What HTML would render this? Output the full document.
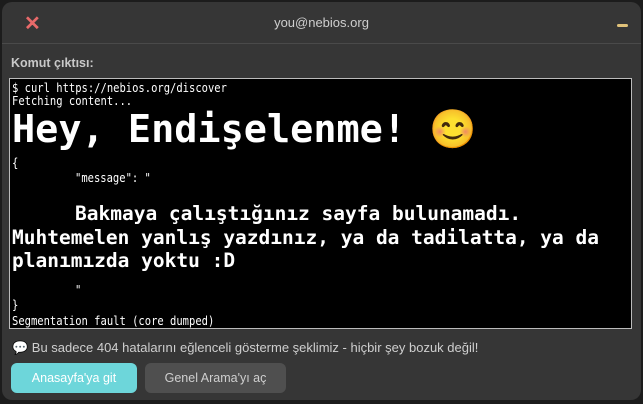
<!DOCTYPE html>
<html><head><meta charset="utf-8"><style>
html,body{margin:0;width:643px;height:404px;background:#1c1c1c;overflow:hidden}
.win{position:absolute;left:2px;top:2px;width:639px;height:398px;background:#363636;border-radius:10px;font-family:"Liberation Sans",sans-serif}
.hdr{height:41px;border-bottom:1px solid #4a4a4a;position:relative}
.title{position:absolute;left:0;right:0;top:13px;text-align:center;color:#cfcfcf;font-size:13px}
.x{position:absolute;left:22px;top:9px;color:#e86a6a;font-size:20px;font-weight:bold}
.min{position:absolute;right:13px;top:22px;width:11px;height:3px;background:#e0c27a;border-radius:2px}
.lbl{position:absolute;left:9px;top:54px;color:#c8c8c8;font-size:12.5px;font-weight:bold}
.term{position:absolute;left:7px;top:76px;width:621px;height:249px;background:#000;border:1px solid #bbb;font-family:"DejaVu Sans Mono",monospace;color:#fff;overflow:hidden}
.t{position:absolute;left:2px;font-size:12px;white-space:pre;line-height:13px;transform:scaleX(0.875);transform-origin:0 0}
.big{position:absolute;left:2px;font-size:38.5px;font-weight:bold;white-space:pre;line-height:40px}
.msg{position:absolute;left:2px;font-size:19.5px;font-weight:bold;line-height:23.5px;width:618px}
.note{position:absolute;left:10px;top:338px;color:#cfcfcf;font-size:13px}
.b1{position:absolute;left:9px;top:361px;width:126px;height:30px;border-radius:6px;background:#6dd6da;color:#fff;font-size:12.5px;text-align:center;line-height:30px}
.b2{position:absolute;left:143px;top:361px;width:141px;height:30px;border-radius:6px;background:#4f4f4f;color:#cfcfcf;font-size:12.5px;text-align:center;line-height:30px}
</style></head><body>
<div class="win">
<div class="hdr"><span class="x">✕</span><div class="title">you@nebios.org</div><div class="min"></div></div>
<div class="lbl">Komut çıktısı:</div>
<div class="term">
<div class="t" style="top:3px">$ curl https://nebios.org/discover</div>
<div class="t" style="top:16px">Fetching content...</div>
<div class="big" style="top:31px">Hey, Endişelenme! <span style="font-family:'Noto Color Emoji',sans-serif;font-size:38px">😊</span></div>
<div class="t" style="top:78px">{</div>
<div class="t" style="top:93px;left:65px">"message": "</div>
<div class="msg" style="top:123px"><span style="padding-left:63px"></span>Bakmaya çalıştığınız sayfa bulunamadı. Muhtemelen yanlış yazdınız, ya da tadilatta, ya da planımızda yoktu :D</div>
<div class="t" style="top:205px;left:65px">"</div>
<div class="t" style="top:220px">}</div>
<div class="t" style="top:236px">Segmentation fault (core dumped)</div>
</div>
<div class="note">💬 Bu sadece 404 hatalarını eğlenceli gösterme şeklimiz - hiçbir şey bozuk değil!</div>
<div class="b1">Anasayfa'ya git</div>
<div class="b2">Genel Arama'yı aç</div>
</div>
</body></html>
